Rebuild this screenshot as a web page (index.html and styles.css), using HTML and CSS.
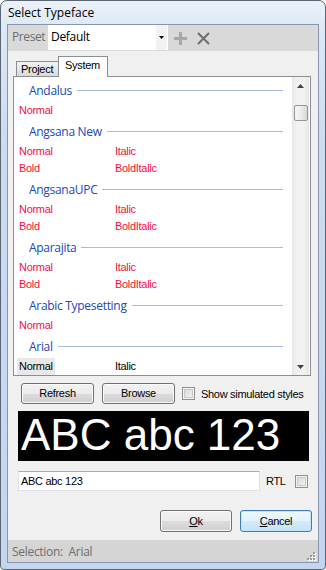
FILE: index.html
```html
<!DOCTYPE html>
<html>
<head>
<meta charset="utf-8">
<title>Select Typeface</title>
<link rel="stylesheet" href="styles.css">
</head>
<body>
<div class="window">
  <div class="titlebar">Select Typeface</div>
  <div class="client">
    <div class="presetbar">
      <span class="preset-label">Preset</span>
      <div class="combo">
        <span class="combo-text">Default</span>
        <span class="combo-btn"><svg width="5" height="3" viewBox="0 0 5 3"><path d="M0 0H5L2.5 3Z" fill="#000"/></svg></span>
      </div>
      <svg class="icon-plus" width="13" height="13" viewBox="0 0 13 13"><path d="M5 0H8V5H13V8H8V13H5V8H0V5H5Z" fill="#a8a8a8"/></svg>
      <svg class="icon-x" width="13" height="13" viewBox="0 0 13 13"><path d="M1 1L12 12M12 1L1 12" stroke="#6e6e6e" stroke-width="2" fill="none"/></svg>
    </div>

    <div class="tabs">
      <div class="tab">Project</div>
      <div class="tab active">System</div>
    </div>
    <div class="panel">
      <div class="list">
        <div class="group">
          <div class="gh"><span>Andalus</span></div>
          <div class="styles"><span class="st">Normal</span></div>
        </div>
        <div class="group">
          <div class="gh"><span>Angsana New</span></div>
          <div class="styles"><span class="st">Normal</span><span class="st">Italic</span><span class="st">Bold</span><span class="st">BoldItalic</span></div>
        </div>
        <div class="group">
          <div class="gh"><span>AngsanaUPC</span></div>
          <div class="styles"><span class="st">Normal</span><span class="st">Italic</span><span class="st">Bold</span><span class="st">BoldItalic</span></div>
        </div>
        <div class="group">
          <div class="gh"><span>Aparajita</span></div>
          <div class="styles"><span class="st">Normal</span><span class="st">Italic</span><span class="st">Bold</span><span class="st">BoldItalic</span></div>
        </div>
        <div class="group">
          <div class="gh"><span>Arabic Typesetting</span></div>
          <div class="styles"><span class="st">Normal</span></div>
        </div>
        <div class="group">
          <div class="gh"><span>Arial</span></div>
          <div class="styles"><span class="st ok selected">Normal</span><span class="st ok">Italic</span></div>
        </div>
      </div>
      <div class="scrollbar">
        <div class="sb-btn"><svg width="7" height="4" viewBox="0 0 7 4"><path d="M0 4H7L3.5 0Z" fill="#404040"/></svg></div>
        <div class="sb-track"><div class="sb-thumb"></div></div>
        <div class="sb-btn"><svg width="7" height="4" viewBox="0 0 7 4"><path d="M0 0H7L3.5 4Z" fill="#404040"/></svg></div>
      </div>
    </div>

    <div class="actions">
      <div class="btn wide">Refresh</div>
      <div class="btn wide">Browse</div>
      <div class="chk"><span class="box"></span><span class="chk-label">Show simulated styles</span></div>
    </div>

    <div class="preview">ABC abc 123</div>

    <div class="inputrow">
      <div class="textbox">ABC abc 123</div>
      <span class="rtl">RTL</span>
      <span class="box"></span>
    </div>

    <div class="dialog-buttons">
      <div class="btn dlg"><u>O</u>k</div>
      <div class="btn dlg default"><u>C</u>ancel</div>
    </div>

    <div class="statusbar">
      <span class="status-text">Selection:&nbsp; Arial</span>
      <svg class="grip" width="9" height="9" viewBox="0 0 9 9">
        <g fill="#fff"><rect x="7" y="1" width="2" height="2"/><rect x="4" y="4" width="2" height="2"/><rect x="7" y="4" width="2" height="2"/><rect x="1" y="7" width="2" height="2"/><rect x="4" y="7" width="2" height="2"/><rect x="7" y="7" width="2" height="2"/></g>
        <g fill="#9a9a9a"><rect x="6" y="0" width="2" height="2"/><rect x="3" y="3" width="2" height="2"/><rect x="6" y="3" width="2" height="2"/><rect x="0" y="6" width="2" height="2"/><rect x="3" y="6" width="2" height="2"/><rect x="6" y="6" width="2" height="2"/></g>
      </svg>
    </div>
  </div>
</div>
</body>
</html>
```
FILE: styles.css
```css
html, body {
  margin: 0;
  padding: 0;
}
body {
  width: 326px;
  height: 570px;
  overflow: hidden;
  background: #ffffff;
}
.window {
  box-sizing: border-box;
  width: 326px;
  height: 570px;
  border: 1px solid #5b6574;
  border-radius: 7px 7px 4px 4px;
  background: linear-gradient(#eaf1f9 0px, #dce8f5 30px, #cbdcf0 140px, #c3d6ee 570px);
  padding: 0 6px 6px 6px;
  display: flex;
  flex-direction: column;
}
.titlebar {
  height: 23px;
  display: flex;
  align-items: center;
  padding-left: 1px;
  font-family: "Segoe UI", "Open Sans", sans-serif;
  font-size: 12px;
  color: #000;
}
.client {
  flex: 1;
  border: 1px solid #8596ad;
  background: #f0f0f0;
  display: flex;
  flex-direction: column;
  font-family: "Liberation Sans", Arial, sans-serif;
  font-size: 11px;
  letter-spacing: -0.3px;
  color: #000;
}
/* preset bar */
.presetbar {
  height: 26px;
  background: #d9d9d9;
  display: flex;
  align-items: flex-start;
  padding-left: 4px;
  box-sizing: border-box;
}
.preset-label {
  width: 36px;
  height: 25px;
  line-height: 24px;
  font-family: "Segoe UI", "Open Sans", sans-serif;
  font-size: 12px;
  letter-spacing: -0.4px;
  color: #6d6d6d;
}
.combo {
  width: 120px;
  height: 25px;
  background: #fff;
  display: flex;
  align-items: stretch;
}
.combo-text {
  flex: 1;
  padding-left: 3px;
  line-height: 24px;
  font-family: "Segoe UI", "Open Sans", sans-serif;
  font-size: 12px;
  letter-spacing: -0.3px;
}
.combo-btn {
  width: 11px;
  margin-right: 1px;
  background: #f2f2f2;
  display: flex;
  align-items: center;
  justify-content: center;
}
.icon-plus {
  margin: 7px 0 0 6px;
}
.icon-x {
  margin: 7px 0 0 10px;
}
/* tabs */
.tabs {
  display: flex;
  align-items: flex-end;
  margin: 5px 0 0 8px;
  height: 20px;
}
.tab {
  box-sizing: border-box;
  width: 42px;
  height: 15px;
  border: 1px solid #8c8e94;
  border-bottom: none;
  border-right: none;
  background: linear-gradient(#f3f3f3, #e6e6e6 50%, #dadada);
  padding-left: 4px;
  line-height: 15px;
  font-size: 11px;
}
.tab.active {
  position: relative;
  z-index: 1;
  width: 50px;
  height: 21px;
  margin-bottom: -1px;
  border-right: 1px solid #8c8e94;
  background: #fff;
  line-height: 16px;
  padding-left: 6px;
}
.panel {
  box-sizing: border-box;
  width: 298px;
  height: 300px;
  margin-left: 5px;
  border: 1px solid #8c8e94;
  background: #fff;
  display: flex;
  overflow: hidden;
}
.list {
  flex: 1;
  padding: 2px 9px 0 0;
  overflow: hidden;
}
.group {
  margin-bottom: 1px;
}
.gh {
  height: 23px;
  display: flex;
  align-items: center;
  padding-left: 15px;
  font-family: "Segoe UI", "Open Sans", sans-serif;
  font-size: 12px;
  letter-spacing: -0.3px;
  color: #2347b5;
}
.gh::after {
  content: "";
  flex: 1;
  height: 1px;
  margin-left: 5px;
  background: #a8b9de;
}
.styles {
  display: grid;
  grid-template-columns: 96px 96px;
  padding-left: 3px;
}
.st {
  justify-self: start;
  height: 17px;
  line-height: 17px;
  padding: 0 2px;
  color: #f5103c;
}
.st.ok {
  color: #000;
}
.st.selected {
  background: #e8e8e8;
}
/* scrollbar */
.scrollbar {
  width: 17px;
  margin-right: 1px;
  display: flex;
  flex-direction: column;
  background: linear-gradient(90deg, #e6e6e6, #f2f2f2 30%, #f2f2f2 70%, #e6e6e6);
}
.sb-btn {
  height: 17px;
  display: flex;
  align-items: center;
  justify-content: center;
}
.sb-track {
  flex: 1;
}
.sb-thumb {
  box-sizing: border-box;
  height: 16px;
  margin: 11px 1px 0 2px;
  border: 1px solid #959595;
  border-radius: 2px;
  background: linear-gradient(90deg, #f6f6f6, #ececec 50%, #d8d8d8);
}
/* action row */
.actions {
  display: flex;
  align-items: center;
  margin: 7px 0 0 13px;
}
.btn {
  box-sizing: border-box;
  border: 1px solid #707070;
  border-radius: 3px;
  background: linear-gradient(#f2f2f2, #ebebeb 50%, #dddddd 50%, #cfcfcf);
  box-shadow: inset 0 0 0 1px #fbfbfb;
  font-size: 11px;
  text-align: center;
  white-space: nowrap;
  color: #000;
}
.btn.wide {
  width: 73px;
  line-height: 19px;
  margin-right: 8px;
}
.chk {
  display: flex;
  align-items: center;
  margin-left: -1px;
}
.box {
  box-sizing: border-box;
  width: 13px;
  height: 13px;
  border: 1px solid #8e8f8f;
  background: #fff;
  box-shadow: inset 0 0 0 1px #f4f4f4, inset 0 0 0 2px #c9c9c9;
  background-image: linear-gradient(135deg, #d4d4d4, #f7f7f7);
  background-clip: content-box;
  padding: 2px;
}
.chk-label {
  margin-left: 6px;
  font-size: 11px;
}
/* preview */
.preview {
  margin: 7px 0 0 10px;
  width: 291px;
  height: 50px;
  background: #000;
  color: #fff;
  font-family: "Liberation Sans", Arial, sans-serif;
  font-size: 44px;
  letter-spacing: 0;
  line-height: 47px;
  padding-left: 3px;
  box-sizing: border-box;
  overflow: hidden;
  white-space: nowrap;
}
/* input row */
.inputrow {
  display: flex;
  align-items: center;
  margin: 10px 0 0 10px;
  height: 20px;
}
.textbox {
  box-sizing: border-box;
  width: 242px;
  height: 20px;
  border: 1px solid #dde1e7;
  border-top-color: #abadb3;
  background: #fff;
  padding-left: 2px;
  line-height: 18px;
  font-size: 11px;
}
.rtl {
  margin-left: 6px;
  width: 29px;
  font-size: 11px;
}
/* dialog buttons */
.dialog-buttons {
  display: flex;
  justify-content: flex-end;
  gap: 8px;
  margin-top: 19px;
  padding-right: 6px;
}
.btn.dlg {
  width: 72px;
  line-height: 20px;
}
.btn.dlg.default {
  border-color: #3c7fb1;
  box-shadow: inset 0 0 0 1px #bfe5f9;
  background: linear-gradient(#eef7fd, #e4f2fb 50%, #d3ebf9 50%, #c4e4f7);
}
/* status bar */
.statusbar {
  margin-top: 8px;
  height: 22px;
  background: #d5d5d5;
  display: flex;
  align-items: center;
  padding-left: 4px;
  padding-right: 2px;
}
.status-text {
  flex: 1;
  font-family: "Segoe UI", "Open Sans", sans-serif;
  font-size: 12px;
  letter-spacing: -0.3px;
  color: #6d6d6d;
}
.grip {
  align-self: flex-end;
  margin-bottom: 1px;
}
```
